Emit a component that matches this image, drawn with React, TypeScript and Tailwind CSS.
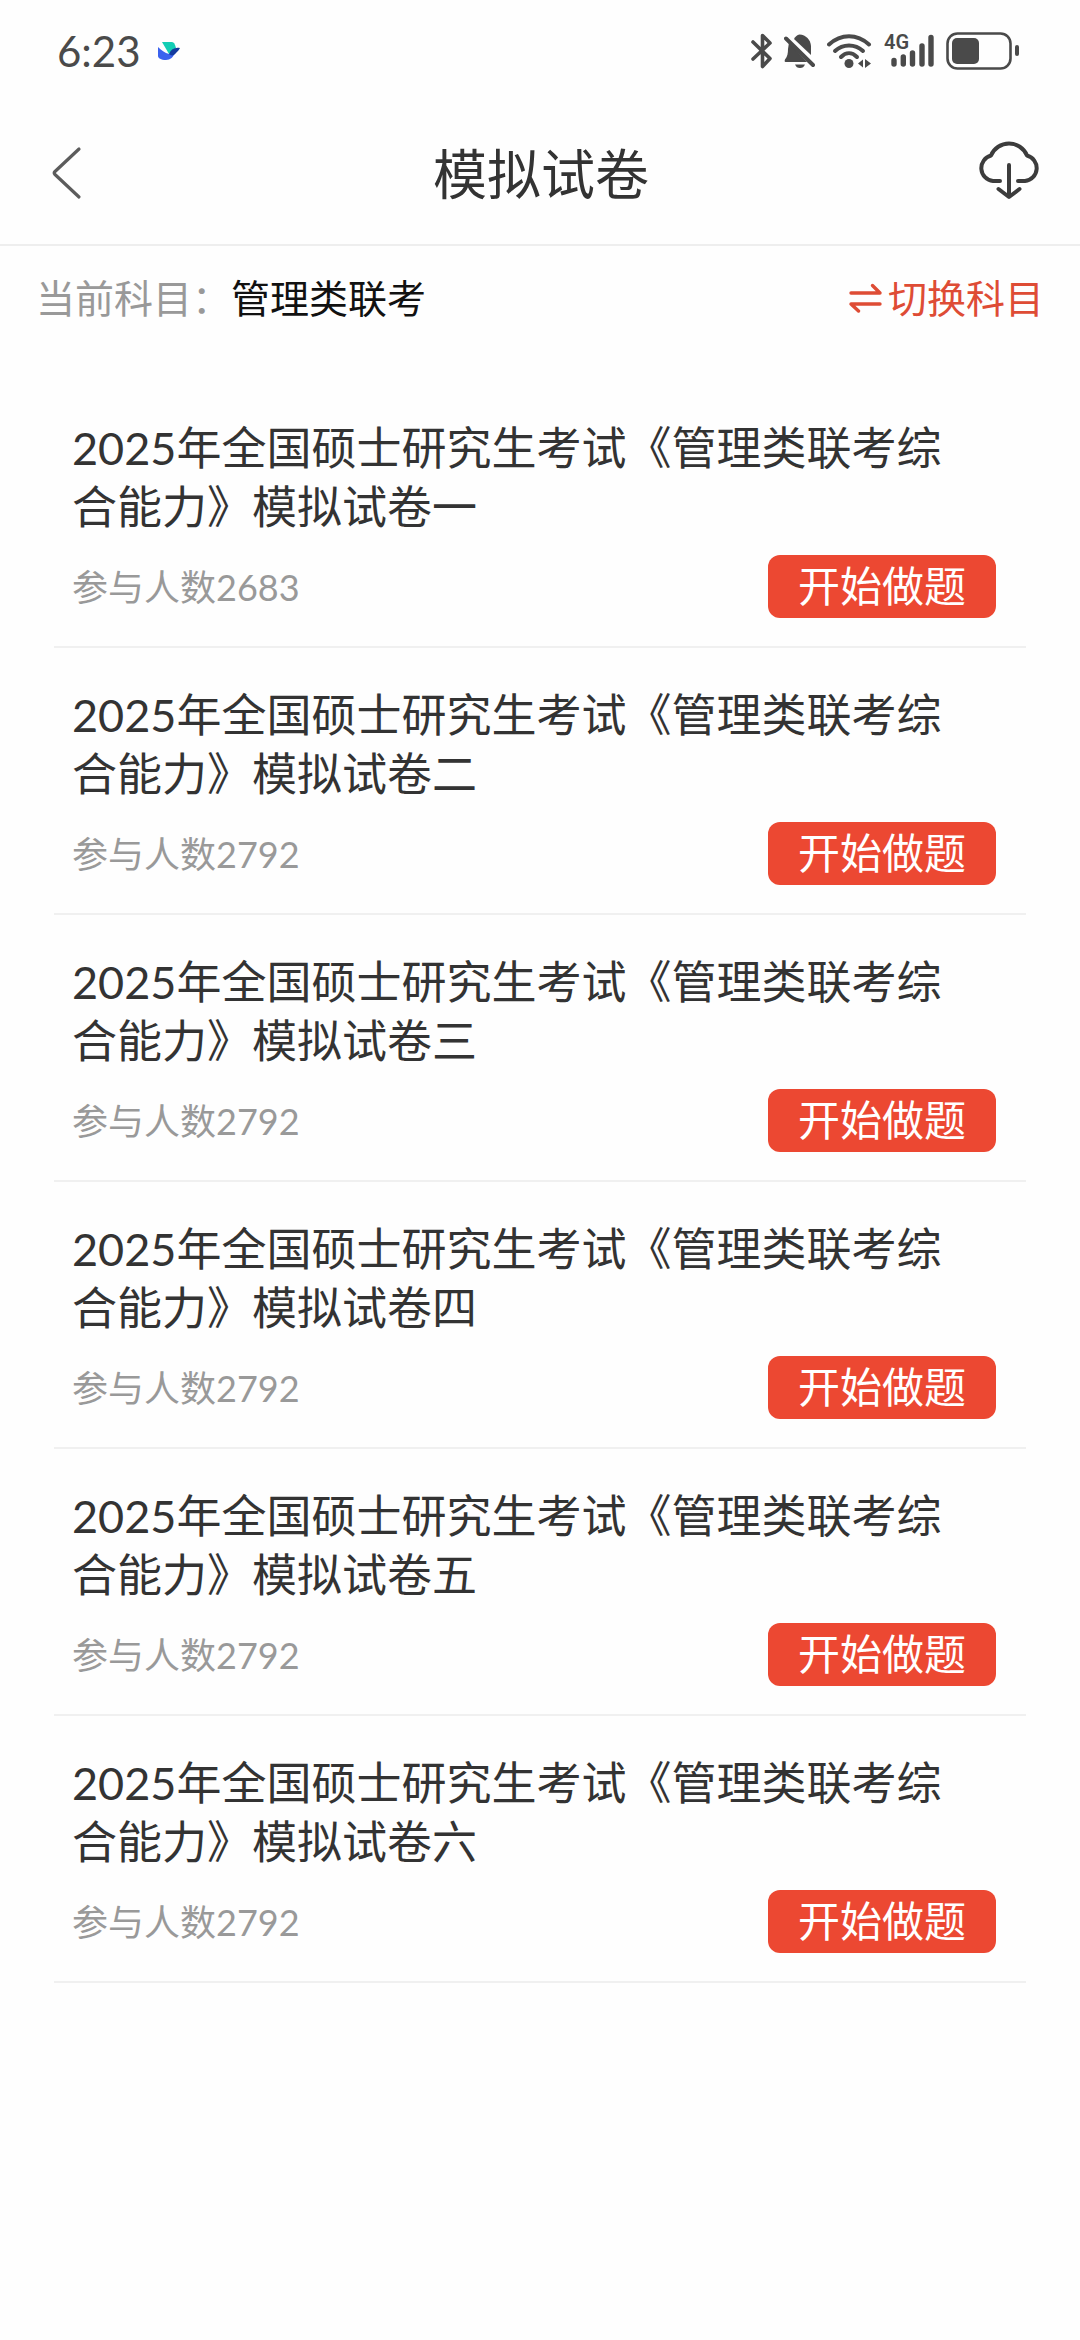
import React from 'react';

type Paper = {
  id: number;
  title: string;
  count: number;
};

const papers: Paper[] = [
  { id: 1, title: '2025年全国硕士研究生考试《管理类联考综合能力》模拟试卷一', count: 2683 },
  { id: 2, title: '2025年全国硕士研究生考试《管理类联考综合能力》模拟试卷二', count: 2792 },
  { id: 3, title: '2025年全国硕士研究生考试《管理类联考综合能力》模拟试卷三', count: 2792 },
  { id: 4, title: '2025年全国硕士研究生考试《管理类联考综合能力》模拟试卷四', count: 2792 },
  { id: 5, title: '2025年全国硕士研究生考试《管理类联考综合能力》模拟试卷五', count: 2792 },
  { id: 6, title: '2025年全国硕士研究生考试《管理类联考综合能力》模拟试卷六', count: 2792 },
];

const StatusBar: React.FC = () => (
  <div className="flex h-[102px] items-center justify-between pl-[57px] pr-[61px] text-[#4a4a4a]">
    <div className="flex items-center gap-4">
      <span className="text-[42px] leading-[60px]">6:23</span>
      <svg width="24" height="20" viewBox="0 0 24 20">
        <path d="M5 1H15C17 1 18 3 19 7L12 13Z" fill="#13cdb4" />
        <path d="M1 6C4 9 8 12 12 13L18 11C17 16 13 19 9 19C4 19 1 17 1 15Z" fill="#3b62ee" />
        <path d="M12 13C14 8 18 6 23 7C22 9 20 11 19 12C17 15 14 15 12 13Z" fill="#123a9e" />
      </svg>
    </div>
    <div className="flex items-center gap-3">
      <svg width="21" height="36" viewBox="0 0 21 36" fill="none" stroke="currentColor" strokeWidth="3.6" strokeLinecap="round" strokeLinejoin="round">
        <path d="M2 9L19 25.500L11.500 33.500V2.500L19 10L2 26" />
      </svg>
      <svg width="31" height="36" viewBox="0 0 31 36">
        <path d="M15.500 1.500C22 2 26.500 6.500 27 13V22L10 6C11.500 3.500 13 1.800 15.500 1.500Z" fill="currentColor" />
        <path d="M5 9.500L23 29H1.500C0.500 29 0.500 27.500 1 26.500C3.500 24 4 20 4 16Z" fill="currentColor" />
        <path d="M11 31.500H21C20 34 18.500 35 16 35S12 34 11 31.500Z" fill="currentColor" />
        <path d="M2 5.500L29 32" stroke="currentColor" strokeWidth="4" strokeLinecap="round" />
      </svg>
      <svg width="45" height="36" viewBox="0 0 45 36" fill="none" stroke="currentColor" strokeWidth="4" strokeLinecap="round">
        <path d="M2 11.500C14 0.500 30 0.500 42 11.500" />
        <path d="M8 18C16 10.500 28 10.500 36 18" />
        <path d="M14 24C19 19 25 19 30 24" />
        <circle cx="22" cy="30.500" r="4.500" fill="currentColor" stroke="none" />
        <path d="M31 30.500L36 26.500V34.500ZM44 30.500L38 26V35Z" fill="currentColor" stroke="none" />
      </svg>
      <svg width="50" height="44" viewBox="0 -4 50 44" fill="none" stroke="currentColor" strokeWidth="5.4" strokeLinecap="round">
        <path d="M10 27.500V31M19.300 24V31M28.500 20V31M38 13V31M47 4.500V31" />
        <text x="0" y="16" fontSize="20" fontWeight="600" fill="currentColor" stroke="none" fontFamily="Roboto, sans-serif">4G</text>
      </svg>
      <svg width="73" height="38" viewBox="0 0 73 38" fill="none">
        <rect x="1.500" y="1.500" width="63" height="35" rx="10" stroke="currentColor" strokeWidth="2.6" />
        <rect x="6" y="6" width="27" height="26" rx="5" fill="currentColor" />
        <path d="M71 15V22" stroke="currentColor" strokeWidth="4" strokeLinecap="round" />
      </svg>
    </div>
  </div>
);

const Header: React.FC = () => (
  <header className="flex h-36 items-center justify-between border-b-2 border-[#eeeeee] pl-[50px] pr-10">
    <button type="button" aria-label="返回" className="w-[62px]">
      <svg width="34" height="54" viewBox="0 0 34 54" fill="none" stroke="#5c5c5c" strokeWidth="3.2" strokeLinecap="round" strokeLinejoin="round">
        <path d="M29 3L5 25.500Q3.500 27 5 28.500L29 51" />
      </svg>
    </button>
    <h1 className="pr-2 pt-1 text-[54px] leading-[72px] text-[#333333]">模拟试卷</h1>
    <button type="button" aria-label="下载" className="pb-1.5">
      <svg width="62" height="60" viewBox="0 0 62 60" fill="none" stroke="#3c3c3c" strokeWidth="4" strokeLinecap="round" strokeLinejoin="round">
        <path d="M22 41H15A13 13 0 0 1 13 15.500A19.500 19.500 0 0 1 49 15.500A13 13 0 0 1 47 41H40" />
        <path d="M31 25V56M20.500 49L31 57L41.500 49" />
      </svg>
    </button>
  </header>
);

const SubjectBar: React.FC = () => (
  <div className="flex items-center justify-between pb-14 pl-9 pr-9 pt-[25px] text-[39px] leading-[54px]">
    <p>
      <span className="text-[#999999]">当前科目：</span>
      <span className="text-[#111111]">管理类联考</span>
    </p>
    <button type="button" className="flex items-center gap-1.5 text-[#de4c35]">
      <svg width="34" height="30" viewBox="0 0 34 30" fill="none" stroke="currentColor" strokeWidth="3.4" strokeLinecap="round" strokeLinejoin="round">
        <path d="M3 10H32L24.500 2.500" />
        <path d="M32 21H3L10.500 28" />
      </svg>
      <span>切换科目</span>
    </button>
  </div>
);

const PaperItem: React.FC<{ paper: Paper }> = ({ paper }) => (
  <li className="border-b-2 border-[#f0f0f0] pb-7 pl-[18px] pr-[30px] pt-[38px]">
    <h2 className="pr-4 text-[45px] leading-[59px] text-[#333333]">{paper.title}</h2>
    <div className="mt-[18px] flex items-center justify-between">
      <span className="text-[36px] leading-[54px] text-[#999999]">参与人数{paper.count}</span>
      <button type="button" className="h-[63px] rounded-xl bg-[#ec4832] px-[30px] text-[42px] leading-[63px] text-white">
        开始做题
      </button>
    </div>
  </li>
);

const App: React.FC = () => {
  return (
    <div className="min-h-screen bg-[#fefefe] font-['Lato','Noto_Sans_CJK_SC',sans-serif]">
      <StatusBar />
      <Header />
      <main>
        <SubjectBar />
        <ul className="mx-[54px]">
          {papers.map((paper) => (
            <PaperItem key={paper.id} paper={paper} />
          ))}
        </ul>
      </main>
    </div>
  );
};

export default App;
